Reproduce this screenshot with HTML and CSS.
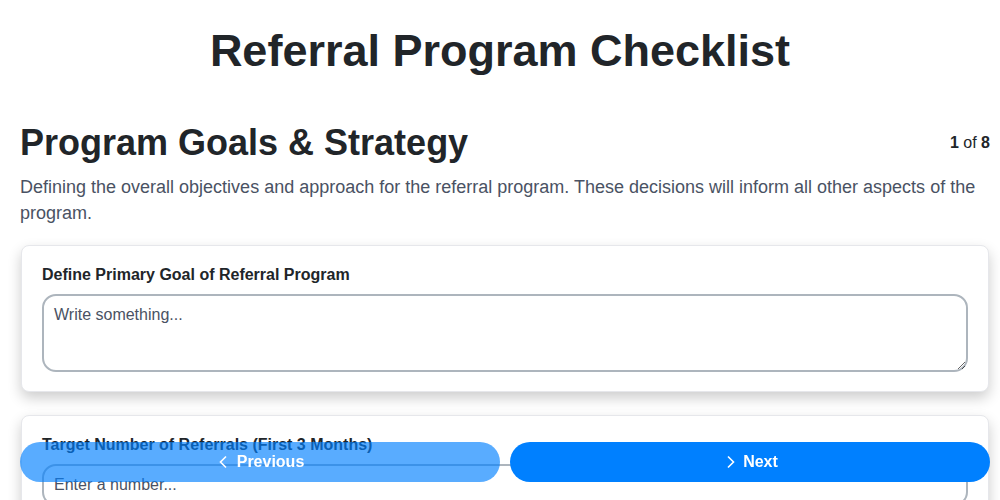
FILE: index.html
```html
<!DOCTYPE html>
<html lang="en">
<head>
<meta charset="utf-8">
<title>Referral Program Checklist</title>
<link rel="stylesheet" href="styles.css">
</head>
<body>
<header class="header">
  <h1 class="title">Referral Program Checklist</h1>
</header>
<main class="page">
  <section class="section">
    <div class="section-head">
      <h2 class="section-title">Program Goals &amp; Strategy</h2>
      <div class="counter"><b>1</b> of <b>8</b></div>
    </div>
    <p class="section-desc">Defining the overall objectives and approach for the referral program. These decisions will inform all other aspects of the program.</p>
    <div class="card">
      <label class="field-label">Define Primary Goal of Referral Program</label>
      <textarea class="field-textarea" placeholder="Write something..."></textarea>
    </div>
    <div class="card">
      <label class="field-label">Target Number of Referrals (First 3 Months)</label>
      <input class="field-input" type="text" placeholder="Enter a number...">
    </div>
  </section>
</main>
<nav class="nav">
  <button class="btn btn-prev"><svg class="chev" viewBox="0 0 16 16" width="16" height="16"><path d="M10 2.5 L4.5 8 L10 13.5" fill="none" stroke="currentColor" stroke-width="1.6"/></svg>Previous</button>
  <button class="btn btn-next"><svg class="chev" viewBox="0 0 16 16" width="16" height="16"><path d="M6 2.5 L11.5 8 L6 13.5" fill="none" stroke="currentColor" stroke-width="1.6"/></svg>Next</button>
</nav>
</body>
</html>
```
FILE: styles.css
```css
* { box-sizing: border-box; }
html, body { margin: 0; padding: 0; background: #fff; }
body { font-family: "Liberation Sans", Arial, sans-serif; color: #212529; }
.header { padding: 26px 20px 0; }
.title { margin: 0; text-align: center; font-size: 45px; font-weight: 700; line-height: 50px; color: #212529; }
.page { padding: 0 10px 0 20px; }
.section { margin-top: 45px; }
.section-head { display: flex; justify-content: space-between; align-items: center; }
.section-title { margin: 0; font-size: 36px; line-height: 44px; font-weight: 700; }
.counter { font-size: 16px; color: #212529; }
.section-desc { margin: 9px 0 19px; font-size: 18px; line-height: 26px; color: #4a5263; }
.card { background: #fff; border: 1px solid #e6e7eb; border-radius: 8px; padding: 20px 20px 19px; margin: 0 1px 23px; box-shadow: 0 6px 14px rgba(0,0,0,0.2); }
.field-label { display: block; font-size: 16px; font-weight: 700; line-height: 18px; margin-bottom: 10px; color: #212529; }
.field-textarea, .field-input { display: block; width: 100%; border: 2px solid #adb5bd; border-radius: 14px; font-family: inherit; font-size: 16px; color: #212529; padding: 10px 10px; background: #fff; }
.field-textarea { height: 78px; resize: vertical; }
.field-input { height: 42px; padding: 8px 10px; }
.field-textarea::placeholder, .field-input::placeholder { color: #4a5263; }
.nav { position: fixed; left: 20px; right: 10px; bottom: 18px; display: flex; gap: 10px; }
.btn { flex: 1; height: 40px; border: none; border-radius: 20px; color: #fff; font-family: inherit; font-size: 16px; font-weight: 700; display: flex; align-items: center; justify-content: center; gap: 5px; }
.btn-prev { background: rgba(0,128,255,0.65); }
.btn-next { background: #0080ff; }
.chev { display: block; }
```
